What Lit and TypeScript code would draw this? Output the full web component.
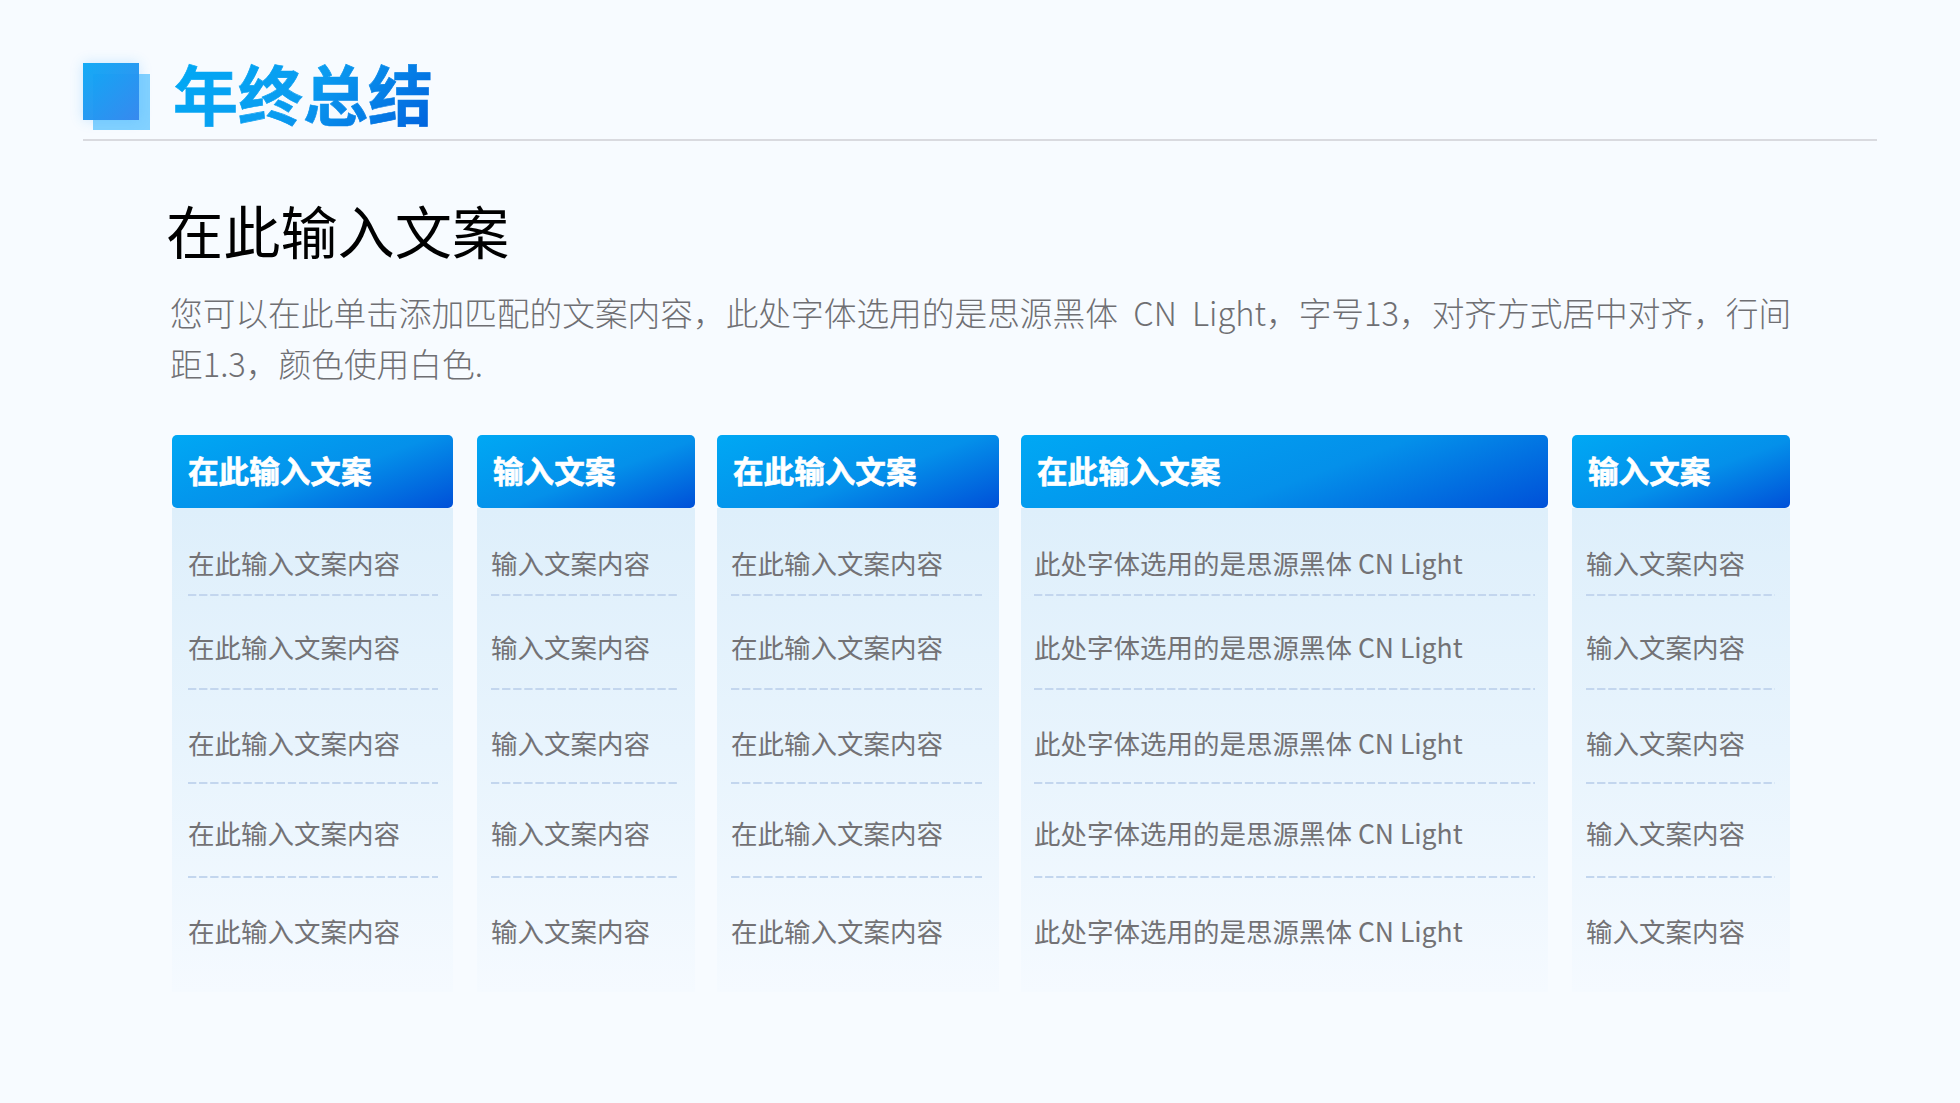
import { LitElement, html, css } from "lit";
import { customElement } from "lit/decorators.js";

interface Col {
  title: string;
  text: string;
  width: number;
  offset: number;
  inset: number;
  rule: number;
}

const LONG = "此处字体选用的是思源黑体 CN Light";
const COLS: Col[] = [
  { title: "在此输入文案", text: "在此输入文案内容", width: 281, offset: 0, inset: 16, rule: 250 },
  { title: "输入文案", text: "输入文案内容", width: 218, offset: 24, inset: 14, rule: 188 },
  { title: "在此输入文案", text: "在此输入文案内容", width: 282, offset: 22, inset: 14, rule: 251 },
  { title: "在此输入文案", text: LONG, width: 527, offset: 22, inset: 13, rule: 501 },
  { title: "输入文案", text: "输入文案内容", width: 218, offset: 24, inset: 14, rule: 189 },
];

@customElement("app-root")
export class AppRoot extends LitElement {
  static styles = css`
    :host {
      display: block;
      width: 1960px;
      height: 1103px;
      overflow: hidden;
      background: #f7fbff;
      font-family: "Noto Sans CJK SC", "Noto Sans", sans-serif;
      box-sizing: border-box;
      padding: 0 83px;
    }
    .top {
      height: 141px;
      border-bottom: 2px solid #d9dadf;
      box-sizing: border-box;
      display: flex;
      align-items: flex-start;
      gap: 23px;
    }
    .logo {
      position: relative;
      width: 67px;
      height: 67px;
      margin-top: 63px;
      flex: none;
    }
    .logo .back {
      position: absolute;
      left: 10px;
      top: 11px;
      width: 57px;
      height: 56px;
      background: #82d1ff;
    }
    .logo .front {
      position: absolute;
      left: 0;
      top: 0;
      width: 56px;
      height: 57px;
      background: linear-gradient(135deg, rgba(10, 168, 245, 0.96), rgba(52, 134, 238, 0.96));
      box-shadow: 0 0 12px rgba(40, 160, 250, 0.22);
    }
    h1 {
      margin: 50px 0 0;
      font-size: 65px;
      line-height: 84px;
      font-weight: 700;
      -webkit-text-stroke: 0.7px transparent;
      background: linear-gradient(135deg, #00aaf5 0%, #0a9cf0 50%, #0060dc 100%);
      -webkit-background-clip: text;
      background-clip: text;
      color: transparent;
    }
    .main {
      padding: 0 87px 0 89px;
    }
    h2 {
      margin: 46px 0 0 -6px;
      font-size: 57.2px;
      line-height: 84px;
      font-weight: 400;
      color: #000;
    }
    p {
      margin: 15px 0 0 -2px;
      font-size: 32.7px;
      line-height: 51px;
      font-weight: 300;
      word-spacing: 8px;
      color: #6f6f73;
      white-space: nowrap;
    }
    .table {
      display: flex;
      margin-top: 47px;
    }
    .col {
      flex: none;
      display: flex;
      flex-direction: column;
    }
    .head {
      height: 73px;
      box-sizing: border-box;
      border-radius: 5px;
      background: linear-gradient(160deg, #00a8f4 0%, #0490ea 55%, #0050d8 100%);
      color: #fff;
      font-size: 30.6px;
      font-weight: 700;
      -webkit-text-stroke: 0.6px #fff;
      line-height: 70px;
      padding-left: 16px;
    }
    .body {
      height: 484px;
      background: linear-gradient(180deg, #deeffb 0%, #e8f4fd 50%, #f5faff 100%);
    }
    .row {
      box-sizing: border-box;
      font-size: 26.5px;
      line-height: 38px;
      color: #737275;
      white-space: nowrap;
      background-image: linear-gradient(90deg, #c3d6ee 8px, transparent 8px);
      background-size: 11.1px 2px;
      background-repeat: repeat-x;
      background-position: left bottom;
    }
    .row:nth-child(1) { height: 88px; padding-top: 36px; }
    .row:nth-child(2) { height: 94px; padding-top: 32px; }
    .row:nth-child(3) { height: 94px; padding-top: 34px; }
    .row:nth-child(4) { height: 94px; padding-top: 30px; }
    .row:nth-child(5) { height: 94px; padding-top: 34px; background-image: none; }
  `;

  render() {
    return html`
      <div class="top">
        <div class="logo"><div class="back"></div><div class="front"></div></div>
        <h1>年终总结</h1>
      </div>
      <div class="main">
        <h2>在此输入文案</h2>
        <p>您可以在此单击添加匹配的文案内容，此处字体选用的是思源黑体 CN Light，字号13，对齐方式居中对齐，行间<br />距1.3，颜色使用白色.</p>
        <div class="table">
          ${COLS.map(
            (c) => html`
              <div class="col" style="width:${c.width}px;margin-left:${c.offset}px">
                <div class="head">${c.title}</div>
                <div class="body" style="padding:0 ${c.width - c.inset - c.rule}px 0 ${c.inset}px">
                  ${[0, 1, 2, 3, 4].map(() => html`<div class="row">${c.text}</div>`)}
                </div>
              </div>
            `
          )}
        </div>
      </div>
    `;
  }
}
